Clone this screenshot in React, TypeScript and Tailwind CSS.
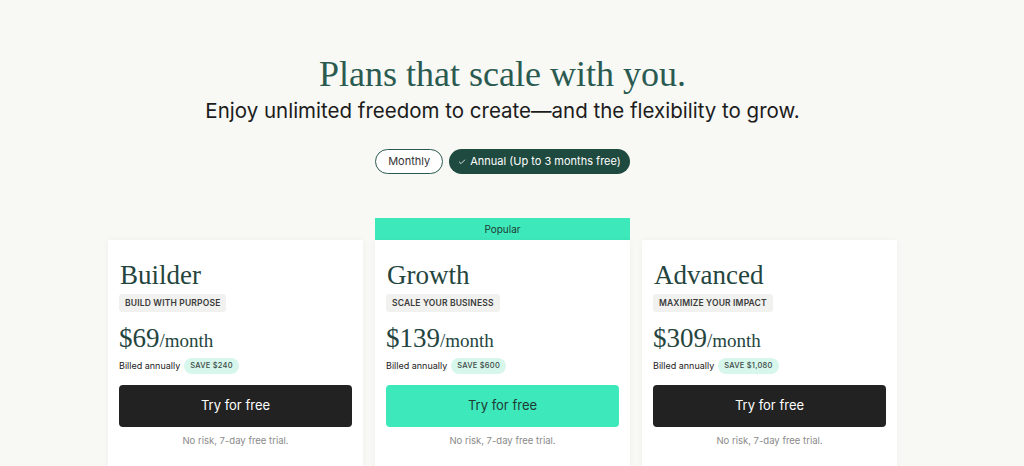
import { Check } from "lucide-react";

const PLANS = [
  { name: "Builder", tag: "Build with purpose", price: "$69", save: "Save $240", popular: false },
  { name: "Growth", tag: "Scale your business", price: "$139", save: "Save $600", popular: true },
  { name: "Advanced", tag: "Maximize your impact", price: "$309", save: "Save $1,080", popular: false },
];

const serif = "font-['Liberation_Serif',serif]";
const sans = "font-['Inter','Liberation_Sans',sans-serif]";

function PlanCard({ plan }: { plan: (typeof PLANS)[number] }) {
  return (
    <div className="w-[255px] flex flex-col">
      {plan.popular ? (
        <div className={`h-[22px] bg-[#3de8bb] flex items-center justify-center text-[10px] text-[#1f3a33] ${sans}`}>
          Popular
        </div>
      ) : (
        <div className="h-[22px]" />
      )}
      <div className="bg-white shadow-[0_0_6px_rgba(0,0,0,0.04)] px-[11px] pt-[18px] pb-[20px] h-[240px]">
        <div className={`${serif} text-[27px] leading-[34px] text-[#24453e] pl-px`}>{plan.name}</div>
        <div className="mt-[2px] flex">
          <span className={`${sans} bg-[#f1f1ef] rounded-[3px] px-[6px] h-[18px] flex items-center text-[8.5px] font-semibold tracking-[0.02em] uppercase text-[#3a3a3a]`}>
            {plan.tag}
          </span>
        </div>
        <div className={`${serif} mt-[11px] flex items-baseline text-[#24453e]`}>
          <span className="text-[27px] leading-[30px]">{plan.price}</span>
          <span className="text-[19px]">/month</span>
        </div>
        <div className={`${sans} mt-[2px] flex items-center gap-[4px] text-[9px] text-[#222]`}>
          <span>Billed annually</span>
          <span className="bg-[#d7f6ec] rounded-full px-[6px] h-[16px] flex items-center text-[7.5px] font-medium tracking-[0.03em] uppercase text-[#3a4a45]">
            {plan.save}
          </span>
        </div>
        <button
          className={`${sans} mt-[11px] w-full h-[42px] rounded-[4px] text-[13px] ${
            plan.popular ? "bg-[#3de8bb] text-[#1f3a33]" : "bg-[#222222] text-white"
          }`}
        >
          Try for free
        </button>
        <div className={`${sans} mt-[7px] text-center text-[9.5px] text-[#8a8a8a]`}>No risk, 7-day free trial.</div>
      </div>
    </div>
  );
}

export default function App() {
  return (
    <div className="w-[1024px] h-[466px] overflow-hidden bg-[#f8f8f4]">
      <div className="w-[1005px] flex flex-col items-center pt-[51px]">
        <h1 className={`${serif} text-[36px] leading-[46px] text-[#2a5a50]`}>Plans that scale with you.</h1>
        <p className={`${sans} text-[20.5px] leading-[28px] text-[#1c1c1c]`}>
          Enjoy unlimited freedom to create—and the flexibility to grow.
        </p>

        {/* Billing toggle */}
        <div className={`${sans} mt-[24px] flex gap-[6px] text-[11px]`}>
          <button className="h-[25px] px-[12px] rounded-full border border-[#2c5a50] bg-white text-[#333]">Monthly</button>
          <button className="h-[25px] px-[9px] rounded-full bg-[#1f4a40] text-white flex items-center gap-[4px]">
            <Check size={8} strokeWidth={2.5} />
            Annual (Up to 3 months free)
          </button>
        </div>

        {/* Plans */}
        <div className="mt-[44px] flex gap-[12px]">
          {PLANS.map(p => (
            <PlanCard key={p.name} plan={p} />
          ))}
        </div>
      </div>
    </div>
  );
}
